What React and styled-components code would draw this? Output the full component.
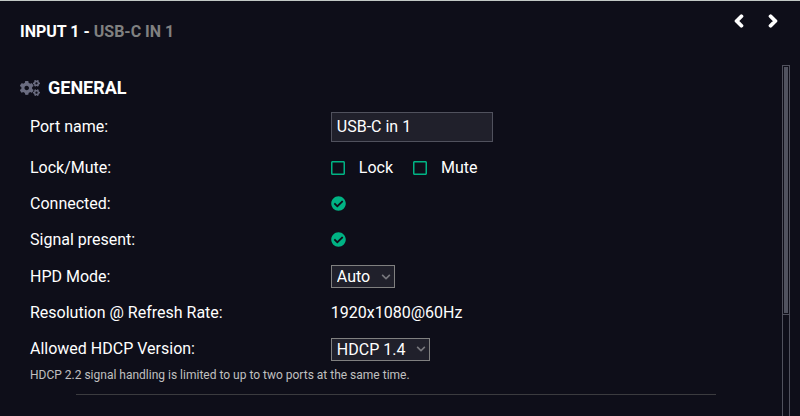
import React, { useState } from 'react';
import styled, { createGlobalStyle } from 'styled-components';
import {
    FaCheckCircle,
    FaChevronDown,
    FaChevronLeft,
    FaChevronRight,
    FaCogs,
    FaRegSquare,
    FaRegCheckSquare,
} from 'react-icons/fa';

const GlobalStyle = createGlobalStyle`
* {
    box-sizing: border-box;
}

body {
    margin: 0;
    background: #0e0e19;
    color: #fff;
    font-family: Roboto, sans-serif;
    font-size: 16px;
    line-height: 20px;
}

button, input, select {
    font: inherit;
    color: inherit;
}
`;

const Panel = styled.main`
    display: flex;
    flex-direction: column;
    height: 100vh;
    overflow: hidden;
    border-top: 1px solid #c1c8c5;
    padding: 0 10px 0 20px;
`;

const Header = styled.header`
    display: flex;
    flex: none;
    justify-content: space-between;
    align-items: flex-start;
    height: 64px;
`;

const Title = styled.h1`
    margin: 21px 0 0;
    font-size: 16px;
    line-height: 20px;
    font-weight: 700;
    text-transform: uppercase;

    span {
        color: #808080;
    }
`;

const Nav = styled.nav`
    display: flex;
    padding-top: 4px;
`;

const NavButton = styled.button`
    display: flex;
    justify-content: center;
    align-items: center;
    width: 34px;
    height: 32px;
    padding: 0;
    border: 0;
    background: none;
    cursor: pointer;

    svg {
        stroke: currentColor;
        stroke-width: 60px;
        stroke-linejoin: round;
        overflow: visible;
    }
`;

const Body = styled.div`
    display: flex;
    flex: 1;
    min-height: 0;
`;

const Content = styled.div`
    flex: 1;
    min-width: 0;
    padding-right: 10px;
    overflow: hidden;
`;

const SectionTitle = styled.h2`
    display: flex;
    align-items: center;
    gap: 8px;
    height: 39px;
    margin: 0;
    padding-top: 6px;
    font-size: 18px;
    line-height: 20px;
    font-weight: 700;
    text-transform: uppercase;

    svg {
        color: #6a6c80;
    }
`;

const rowHeights = {
    text: '36px',
    select: '37px',
    input: '46px',
};

const Row = styled.div`
    display: flex;
    align-items: center;
    min-height: ${({ $kind = 'text' }) => rowHeights[$kind]};
`;

const Label = styled.label`
    flex: 0 0 40%;
    padding-left: 10px;
`;

const Value = styled.div`
    display: flex;
    flex: 1;
    align-items: center;
    padding-left: 10px;
`;

const TextInput = styled.input`
    width: 162px;
    height: 30px;
    padding: 0 5px 2px;
    border: 1px solid #50515d;
    background: #20202b;
`;

const CheckLabel = styled.label`
    display: flex;
    align-items: center;
    gap: 14px;
    margin-right: 20px;
    cursor: pointer;

    input {
        position: absolute;
        width: 14px;
        height: 16px;
        margin: 0;
        opacity: 0;
    }

    svg {
        width: 14px;
        height: 16px;
        margin-bottom: 1px;
        color: #00b384;
    }
`;

const StatusIcon = styled(FaCheckCircle)`
    margin-bottom: 1px;
    color: #00b384;
`;

const SelectBox = styled.div`
    display: grid;
    align-items: center;

    select {
        grid-area: 1 / 1;
        height: 23px;
        padding: 1px 23px 0 5px;
        border: 1px solid #808080;
        border-radius: 0;
        background: #20202b;
        appearance: none;
    }

    svg {
        grid-area: 1 / 1;
        justify-self: end;
        margin-right: 4px;
        color: #77777d;
        pointer-events: none;
    }
`;

const Note = styled.p`
    margin: 0;
    padding-left: 10px;
    color: #c0c0c0;
    font-size: 12px;
    line-height: 16px;
`;

const Divider = styled.hr`
    width: 85%;
    margin: 11px auto;
    border: 0;
    border-top: 1px solid #3b3b3f;
`;

const ScrollTrack = styled.div`
    flex: none;
    width: 8px;
    border: 1px solid #50515d;
    border-bottom: 0;
`;

const ScrollThumb = styled.div`
    height: 71%;
    padding: 1px;
    border-bottom: 1px solid #50515d;

    &::before {
        content: '';
        display: block;
        height: 100%;
        background: #50525f;
    }
`;

const Checkbox = ({ label }) => {
    const [checked, setChecked] = useState(false);
    const Icon = checked ? FaRegCheckSquare : FaRegSquare;

    return (
        <CheckLabel>
            <input type="checkbox" checked={checked} onChange={(e) => setChecked(e.target.checked)} />
            <Icon />
            {label}
        </CheckLabel>
    );
};

const Select = ({ id, options }) => (
    <SelectBox>
        <select id={id}>
            {options.map((option) => <option key={option}>{option}</option>)}
        </select>
        <FaChevronDown size={10} />
    </SelectBox>
);

const App = () => {
    const [portName, setPortName] = useState('USB-C in 1');

    return (
        <>
            <GlobalStyle />
            <Panel>
                <Header>
                    <Title>Input 1 - <span>USB-C in 1</span></Title>
                    <Nav>
                        <NavButton aria-label="Previous port"><FaChevronLeft size={14} /></NavButton>
                        <NavButton aria-label="Next port"><FaChevronRight size={14} /></NavButton>
                    </Nav>
                </Header>
                <Body>
                    <Content>
                        <SectionTitle><FaCogs size={20} />General</SectionTitle>
                        <Row $kind="input">
                            <Label htmlFor="port-name">Port name:</Label>
                            <Value>
                                <TextInput id="port-name" value={portName} onChange={(e) => setPortName(e.target.value)} />
                            </Value>
                        </Row>
                        <Row>
                            <Label as="div">Lock/Mute:</Label>
                            <Value>
                                <Checkbox label="Lock" />
                                <Checkbox label="Mute" />
                            </Value>
                        </Row>
                        <Row>
                            <Label as="div">Connected:</Label>
                            <Value><StatusIcon size={15} /></Value>
                        </Row>
                        <Row>
                            <Label as="div">Signal present:</Label>
                            <Value><StatusIcon size={15} /></Value>
                        </Row>
                        <Row $kind="select">
                            <Label htmlFor="hpd-mode">HPD Mode:</Label>
                            <Value><Select id="hpd-mode" options={['Auto']} /></Value>
                        </Row>
                        <Row>
                            <Label as="div">Resolution @ Refresh Rate:</Label>
                            <Value>1920x1080@60Hz</Value>
                        </Row>
                        <Row>
                            <Label htmlFor="hdcp-version">Allowed HDCP Version:</Label>
                            <Value><Select id="hdcp-version" options={['HDCP 1.4']} /></Value>
                        </Row>
                        <Note>HDCP 2.2 signal handling is limited to up to two ports at the same time.</Note>
                        <Divider />
                    </Content>
                    <ScrollTrack>
                        <ScrollThumb />
                    </ScrollTrack>
                </Body>
            </Panel>
        </>
    );
};

export default App;
